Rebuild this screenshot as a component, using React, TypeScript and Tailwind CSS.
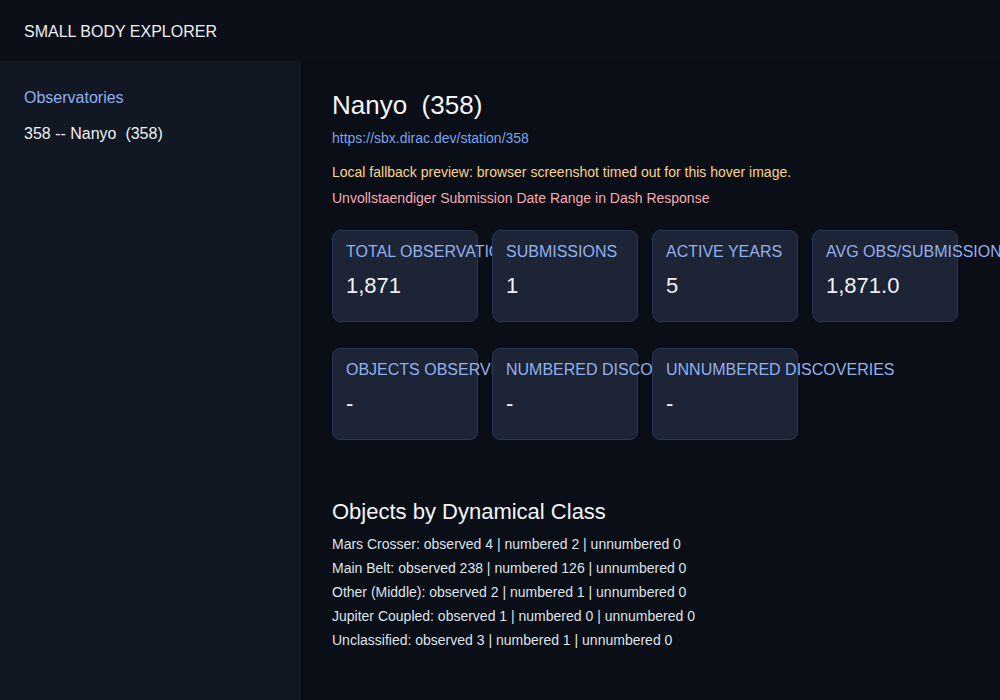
import React from "react";

const stats = [
  { label: "Total Observations", value: "1,871" },
  { label: "Submissions", value: "1" },
  { label: "Active Years", value: "5" },
  { label: "Avg Obs/Submission", value: "1,871.0" },
];

const discoveries = [
  { label: "Objects Observed", value: "-" },
  { label: "Numbered Discoveries", value: "-" },
  { label: "Unnumbered Discoveries", value: "-" },
];

const classes = [
  "Mars Crosser: observed 4 | numbered 2 | unnumbered 0",
  "Main Belt: observed 238 | numbered 126 | unnumbered 0",
  "Other (Middle): observed 2 | numbered 1 | unnumbered 0",
  "Jupiter Coupled: observed 1 | numbered 0 | unnumbered 0",
  "Unclassified: observed 3 | numbered 1 | unnumbered 0",
];

const StatCard = ({ label, value }: { label: string; value: string }) => (
  <div className="w-[146px] h-[92px] shrink-0 rounded-lg border border-[#25385a] bg-[#1c2436] px-[13px] pt-[11px]">
    <div className="text-[16px] leading-[20px] uppercase text-[#93b0ee] whitespace-nowrap">{label}</div>
    <div className="mt-[11px] text-[22px] leading-[26px] text-[#f1f3f7]">{value}</div>
  </div>
);

export default function App() {
  return (
    <div className="w-[1000px] h-[700px] flex flex-col bg-[#0a0e16] text-[#e5e7eb] font-['Liberation_Sans',Arial,sans-serif] overflow-hidden">
      <header className="h-[61px] shrink-0 flex items-center px-6 pt-[2px] bg-[#0b0f18] text-[16px] text-[#eef0f4]">
        SMALL BODY EXPLORER
      </header>
      <div className="flex flex-1 min-h-0">
        <aside className="w-[301px] shrink-0 bg-[#111723] px-6 pt-[27px]">
          <div className="text-[16px] leading-[20px] text-[#8fb0f0]">Observatories</div>
          <div className="mt-4 text-[16px] leading-[20px] text-[#eef0f4] whitespace-pre">358 -- Nanyo  (358)</div>
        </aside>
        <main className="flex-1 pl-[31px] pt-[29px]">
          <h1 className="text-[26px] leading-[30px] text-[#f4f5f8] whitespace-pre">Nanyo  (358)</h1>
          <div className="mt-[10px] text-[14px] leading-[16px] text-[#7ea3ee]">https://sbx.dirac.dev/station/358</div>
          <div className="mt-[18px] text-[14px] leading-[16px] text-[#fbd38d]">
            Local fallback preview: browser screenshot timed out for this hover image.
          </div>
          <div className="mt-[10px] text-[14px] leading-[16px] text-[#f8abb3]">
            Unvollstaendiger Submission Date Range in Dash Response
          </div>
          <div className="mt-[24px] flex gap-[14px]">
            {stats.map((s) => (
              <StatCard key={s.label} {...s} />
            ))}
          </div>
          <div className="mt-[26px] flex gap-[14px]">
            {discoveries.map((s) => (
              <StatCard key={s.label} {...s} />
            ))}
          </div>
          <h2 className="mt-[59px] text-[22px] leading-[26px] text-[#f4f5f8]">Objects by Dynamical Class</h2>
          <div className="mt-[7px] flex flex-col">
            {classes.map((c) => (
              <div key={c} className="text-[14px] leading-[24px] text-[#dfe3ea]">
                {c}
              </div>
            ))}
          </div>
        </main>
      </div>
    </div>
  );
}
